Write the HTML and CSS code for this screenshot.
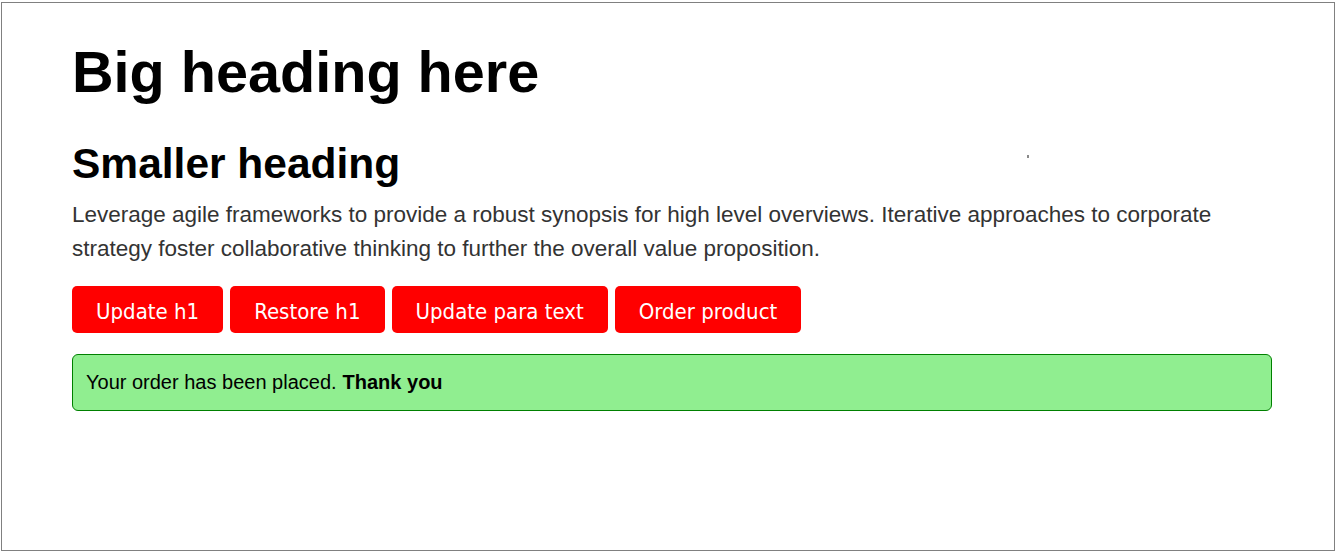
FILE: index.html
```html
<!DOCTYPE html>
<html lang="en">
<head>
<meta charset="utf-8">
<title>Demo</title>
<link rel="stylesheet" href="styles.css">
</head>
<body>
<div class="frame">
  <span class="speck"></span>
  <main class="container">
    <h1 class="big">Big heading here</h1>
    <h2 class="small">Smaller heading</h2>
    <p class="lead">Leverage agile frameworks to provide a robust synopsis for high level overviews. Iterative approaches to corporate strategy foster collaborative thinking to further the overall value proposition.</p>
    <div class="actions">
      <button class="btn">Update h1</button>
      <button class="btn">Restore h1</button>
      <button class="btn">Update para text</button>
      <button class="btn">Order product</button>
    </div>
    <div class="alert">Your order has been placed. <strong>Thank you</strong></div>
  </main>
</div>
</body>
</html>
```

FILE: styles.css
```css
* { box-sizing: border-box; }
html, body { margin: 0; padding: 0; background: #fff; }
body {
  font-family: "Liberation Sans", Arial, sans-serif;
  color: #000;
}
.frame {
  position: relative;
  margin: 2px 1px 1px 1px;
  height: 549px;
  border: 1px solid #808080;
}
.speck {
  position: absolute;
  left: 1025px;
  top: 152px;
  width: 2px;
  height: 3px;
  background: #8a8a8a;
}
.container {
  margin-left: 70px;
  width: 1200px;
}
.big {
  margin: 36px 0 0;
  font-size: 57.6px;
  line-height: 67px;
  font-weight: bold;
}
.small {
  margin: 34px 0 0;
  font-size: 42.5px;
  line-height: 48px;
  font-weight: bold;
}
.lead {
  margin: 10px 0 0;
  font-size: 22.5px;
  line-height: 34px;
  color: #333;
}
.actions {
  display: flex;
  gap: 7px;
  margin-top: 20px;
}
.btn {
  height: 47px;
  padding: 3px 24px 0;
  border: none;
  border-radius: 5px;
  background: #ff0000;
  color: #fff;
  font-family: "DejaVu Sans Condensed", "DejaVu Sans", sans-serif;
  font-size: 22px;
}
.alert {
  margin-top: 21px;
  height: 57px;
  display: flex;
  align-items: center;
  padding: 0 13px;
  background: #90ee90;
  border: 1px solid #008000;
  border-radius: 6px;
  font-size: 20px;
  color: #000;
}
.alert strong { margin-left: 6px; }
```
